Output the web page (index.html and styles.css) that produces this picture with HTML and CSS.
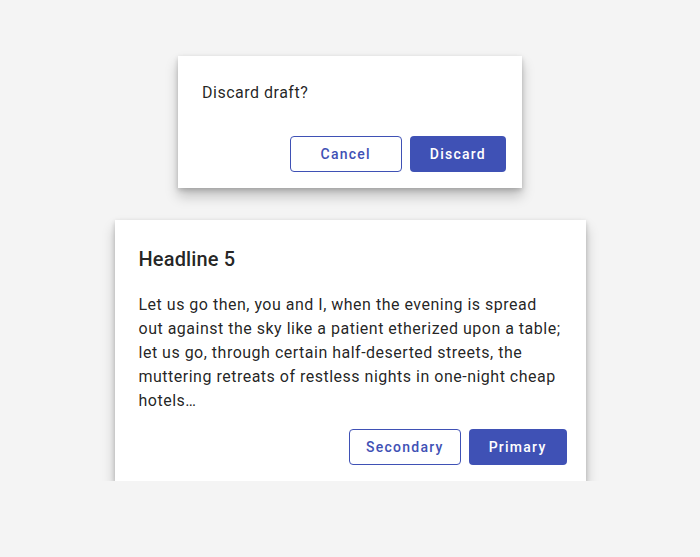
FILE: index.html
```html
<!DOCTYPE html>
<html>
<head>
  <title>Dialogs</title>
  <meta name="viewport" content="width=device-width, initial-scale=1">
  <link rel="stylesheet" href="styles.css">
</head>
<body>
  <div class="stage">
    <!-- Simple confirm dialog -->
    <div class="dialog dialog-small">
      <div class="dialog-content">
        <p class="dialog-text">Discard draft?</p>
      </div>
      <div class="dialog-actions">
        <button class="btn btn-outlined btn-cancel">Cancel</button>
        <button class="btn btn-filled">Discard</button>
      </div>
    </div>

    <!-- Dialog with title and body -->
    <div class="dialog dialog-large">
      <div class="dialog-content">
        <h2 class="dialog-title">Headline 5</h2>
        <p class="dialog-body">Let us go then, you and I, when the evening is spread out against the sky like a patient etherized upon a table; let us go, through certain half-deserted streets, the muttering retreats of restless nights in one-night cheap hotels…</p>
      </div>
      <div class="dialog-actions">
        <button class="btn btn-outlined">Secondary</button>
        <button class="btn btn-filled">Primary</button>
      </div>
    </div>
  </div>
</body>
</html>
```

FILE: styles.css
```css
/* Page */
body {
  margin: 0;
  background-color: #f4f4f4;
  font-family: Roboto, "Liberation Sans", sans-serif;
  color: rgba(0, 0, 0, 0.87);
}

.stage {
  display: flex;
  flex-direction: column;
  align-items: center;
  gap: 32px;
  padding-top: 56px;
}

/* Dialog surface */
.dialog {
  background-color: #fff;
  box-shadow: 0 8px 12px rgba(0, 0, 0, 0.22), 0 2px 5px rgba(0, 0, 0, 0.18);
}

.dialog-small {
  width: 344px;
}

.dialog-large {
  width: 471px;
}

.dialog-content {
  padding: 25px 24px 0 24px;
}

.dialog-text {
  margin: 0;
  font-size: 16px;
  line-height: 24px;
  letter-spacing: 0.5px;
  padding-bottom: 31px;
}

.dialog-title {
  margin: 0;
  font-size: 20px;
  font-weight: 500;
  line-height: 28px;
  letter-spacing: 0.15px;
  padding-bottom: 20px;
}

.dialog-body {
  margin: 0;
  font-size: 16px;
  line-height: 24px;
  letter-spacing: 0.5px;
  padding-bottom: 16px;
}

/* Action row */
.dialog-actions {
  display: flex;
  justify-content: flex-end;
  gap: 8px;
  padding: 0 16px 16px 16px;
}

.dialog-large .dialog-actions {
  padding-right: 19px;
}

/* Buttons */
.btn {
  height: 36px;
  padding: 0 20px;
  border-radius: 4px;
  font-family: Roboto, "Liberation Sans", sans-serif;
  font-size: 14px;
  font-weight: 500;
  letter-spacing: 1.25px;
  cursor: pointer;
}

.btn-outlined {
  padding: 0 16px;
  background-color: #fff;
  color: #3f51b5;
  border: 1px solid #3f51b5;
}

.btn-cancel {
  min-width: 112px;
}

.btn-filled {
  background-color: #3f51b5;
  color: #fff;
  border: none;
}
```
